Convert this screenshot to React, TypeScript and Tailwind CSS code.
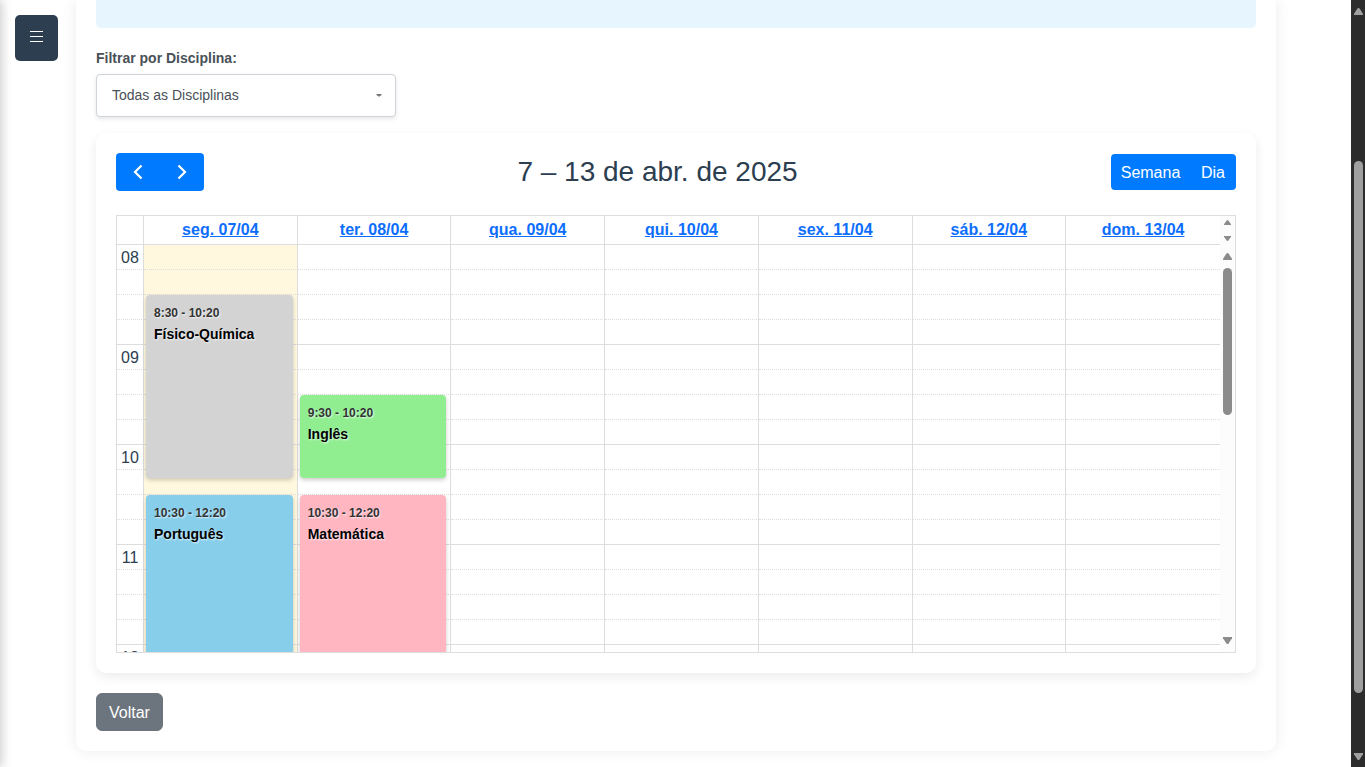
import React from 'react';

type Lesson = {
  day: number;
  slot: number;
  time: string;
  title: string;
  look: string;
};

const days = [
  'seg. 07/04',
  'ter. 08/04',
  'qua. 09/04',
  'qui. 10/04',
  'sex. 11/04',
  'sáb. 12/04',
  'dom. 13/04',
];

const slots = Array.from({ length: 20 }, (_, i) => i);

const lessons: Lesson[] = [
  { day: 0, slot: 2, time: '8:30 - 10:20', title: 'Físico-Química', look: 'h-[183px] bg-[#d3d3d3]' },
  { day: 0, slot: 10, time: '10:30 - 12:20', title: 'Português', look: 'h-[183px] bg-[#87ceeb]' },
  { day: 1, slot: 6, time: '9:30 - 10:20', title: 'Inglês', look: 'h-[83px] bg-[#90ee90]' },
  { day: 1, slot: 10, time: '10:30 - 12:20', title: 'Matemática', look: 'h-[183px] bg-[#ffb6c1]' },
];

function Arrow({ down = false, small = false }: { down?: boolean; small?: boolean }) {
  return (
    <svg
      className={small ? 'h-[5px] w-[7px]' : 'h-[7px] w-[9px]'}
      viewBox="0 0 9 7"
      preserveAspectRatio="none"
      fill="currentColor"
      aria-hidden="true"
    >
      {down ? (
        <path d="M0 0H9V1.2L5.6 6.4Q4.5 7.6 3.4 6.4L0 1.2Z" />
      ) : (
        <path d="M0 7H9V5.8L5.6 0.6Q4.5-.6 3.4 .6L0 5.8Z" />
      )}
    </svg>
  );
}

function Chevron({ right = false }: { right?: boolean }) {
  return (
    <svg className="h-4 w-4" viewBox="0 0 16 16" fill="none" stroke="currentColor" strokeWidth="2.2" aria-hidden="true">
      {right ? <path d="M4.5 1.5 11 8l-6.5 6.5" /> : <path d="M11.5 1.5 5 8l6.5 6.5" />}
    </svg>
  );
}

function LessonCard({ lesson }: { lesson: Lesson }) {
  return (
    <div
      className={`absolute top-0 right-1 left-0.5 z-10 rounded px-2 pt-2 shadow-[0_2px_4px_rgba(0,0,0,0.2)] [text-shadow:1px_1px_2px_rgba(255,255,255,0.8)] ${lesson.look}`}
    >
      <div className="text-[12px] leading-5 font-bold text-[#333]">{lesson.time}</div>
      <div className="text-[14px] leading-[22px] font-bold text-black">{lesson.title}</div>
    </div>
  );
}

function Columns() {
  return (
    <colgroup>
      <col className="w-[27px]" />
      {days.map((day) => (
        <col key={day} />
      ))}
    </colgroup>
  );
}

function Calendar() {
  return (
    <div className="border border-[#ddd]">
      <div className="flex">
        <table className="w-full min-w-0 flex-1 table-fixed border-separate border-spacing-0">
          <Columns />
          <thead>
            <tr>
              <td className="h-[29px] border-r border-b border-[#ddd] p-0" />
              {days.map((day) => (
                <th
                  key={day}
                  scope="col"
                  className="h-[29px] border-r border-b border-[#ddd] p-0 text-[16px] leading-6 font-bold last:border-r-0"
                >
                  <a href="#dia" className="text-[#0d6efd] underline">
                    {day}
                  </a>
                </th>
              ))}
            </tr>
          </thead>
        </table>
        <div className="flex w-[15px] flex-col items-center justify-between bg-[#fcfcfc] py-1 text-[#8b8b8b]">
          <Arrow small />
          <Arrow small down />
        </div>
      </div>

      <div className="flex h-[407px] overflow-hidden">
        <div className="min-w-0 flex-1">
          <table className="w-full table-fixed border-separate border-spacing-0">
            <Columns />
            <tbody>
              {slots.map((slot) => {
                const line = slot % 4 === 3 ? 'border-b-[#ddd]' : '[border-bottom-style:dotted] border-b-[#ddd]';
                return (
                  <tr key={slot}>
                    <th
                      scope="row"
                      className={`h-[25px] border-r border-b border-r-[#ddd] p-0 pt-0.5 text-center text-[16px] leading-[22px] font-normal ${line}`}
                    >
                      {slot % 4 === 0 ? String(8 + slot / 4).padStart(2, '0') : null}
                    </th>
                    {days.map((day, index) => {
                      const lesson = lessons.find((l) => l.day === index && l.slot === slot);
                      return (
                        <td
                          key={day}
                          className={`relative h-[25px] border-r border-b border-r-[#ddd] p-0 last:border-r-0 ${line} ${index === 0 ? 'bg-[#fff8df]' : ''}`}
                        >
                          {lesson ? <LessonCard lesson={lesson} /> : null}
                        </td>
                      );
                    })}
                  </tr>
                );
              })}
            </tbody>
          </table>
        </div>
        <div className="flex w-[15px] flex-col items-center bg-[#fcfcfc] py-2 text-[#8b8b8b]">
          <Arrow />
          <div className="mt-2 h-[147px] w-[9px] rounded-full bg-[#8b8b8b]" />
          <div className="mt-auto">
            <Arrow down />
          </div>
        </div>
      </div>
    </div>
  );
}

export default function App() {
  return (
    <div className="flex min-h-screen bg-white font-['Liberation_Sans',Arial,sans-serif] text-[16px] leading-6 text-[#2c3e50]">
      <aside className="fixed inset-y-0 -left-[250px] w-[250px] bg-white shadow-[2px_0_10px_rgba(0,0,0,0.2)]" />
      <button
        type="button"
        aria-label="Menu"
        className="fixed top-[15px] left-[15px] z-20 flex h-[46px] w-[43px] justify-center rounded-[5px] bg-[#2c3e50] pt-[15px] text-white"
      >
        <svg className="h-[13px] w-[13px]" viewBox="0 0 13 13" stroke="currentColor" aria-hidden="true">
          <path d="M0 1.5h13M0 6.5h13M0 11.5h13" />
        </svg>
      </button>

      <div className="min-w-0 flex-1 pb-4 pl-px">
        <main className="mx-auto max-w-[1200px] rounded-b-[10px] bg-white px-5 pb-5 shadow-[0_0_15px_rgba(0,0,0,0.08)]">
          <div className="h-7 rounded-b-[5px] bg-[#e7f5ff]" />

          <div className="pt-5">
            <label htmlFor="disciplina" className="block text-[14px] leading-[21px] font-bold text-[#495057]">
              Filtrar por Disciplina:
            </label>
            <div className="relative mt-[5px] max-w-[300px]">
              <select
                id="disciplina"
                className="block h-[43px] w-full appearance-none rounded-[4px] border border-[#ced4da] bg-white px-[15px] pb-0.5 text-[14px] text-[#495057] shadow-[0_2px_4px_rgba(0,0,0,0.1)]"
              >
                <option>Todas as Disciplinas</option>
              </select>
              <svg
                className="pointer-events-none absolute top-5 right-[14px] h-[3px] w-[6px]"
                viewBox="0 0 6 3"
                fill="#777"
                aria-hidden="true"
              >
                <path d="M0.5 0h5v1L3.5 2.5h-1L0.5 1z" />
              </svg>
            </div>
          </div>

          <section className="mt-4 rounded-[10px] bg-white p-5 shadow-[0_4px_12px_rgba(0,0,0,0.08)]">
            <div className="mb-6 flex items-center justify-between">
              <div className="flex h-[38px] overflow-hidden rounded-[4px] bg-[#007bff] text-white">
                <button type="button" aria-label="Anterior" className="flex w-11 items-center justify-center">
                  <Chevron />
                </button>
                <button type="button" aria-label="Próxima" className="flex w-11 items-center justify-center">
                  <Chevron right />
                </button>
              </div>
              <h2 className="text-[28px] leading-9 font-normal">7 – 13 de abr. de 2025</h2>
              <div className="flex h-9 overflow-hidden rounded-[4px] bg-[#007bff] text-white">
                <button type="button" className="w-[79px] pt-0.5">
                  Semana
                </button>
                <button type="button" className="w-[46px] pt-0.5">
                  Dia
                </button>
              </div>
            </div>
            <Calendar />
          </section>

          <a
            href="#voltar"
            className="mt-5 inline-block rounded-[6px] border border-[#6c757d] bg-[#6c757d] px-3 pt-[7px] pb-[5px] align-top text-white"
          >
            Voltar
          </a>
        </main>
      </div>

      <div className="flex w-[14px] flex-col items-center bg-[#2c2c2c] pt-2 pb-[7px] text-[#9f9f9f]">
        <Arrow />
        <div className="mt-[146px] mb-[60px] w-[9px] flex-1 rounded-full bg-[#9f9f9f]" />
        <Arrow down />
      </div>
    </div>
  );
}
